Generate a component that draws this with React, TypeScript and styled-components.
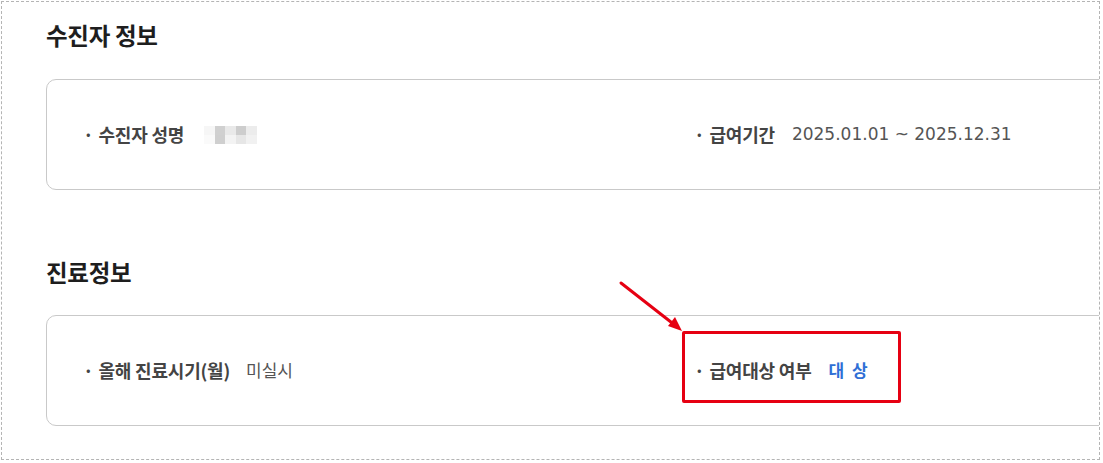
import React from "react";
import styled, { createGlobalStyle } from "styled-components";

const Global = createGlobalStyle`
  html, body { margin: 0; padding: 0; background: #fff; overflow: hidden; }
  body { font-family: "Noto Sans CJK KR", "Noto Sans", sans-serif; }
`;

const Frame = styled.div`
  margin: 1px 0 0 1px;
  width: 1099px;
  height: 459px;
  border: 1px dashed #b4b4b4;
  overflow: hidden;
  padding: 16px 0 0 44px;
  box-sizing: border-box;
  display: flex;
  flex-direction: column;
`;

const Heading = styled.h2<{ $gap: number }>`
  margin: 0 0 ${(p) => p.$gap}px;
  font-size: 23.5px;
  line-height: 34px;
  font-weight: 700;
  color: #1e1e1e;
  letter-spacing: -0.3px;
`;

const Card = styled.div<{ $after: number }>`
  width: 1120px;
  height: 111px;
  box-sizing: border-box;
  border: 1px solid #c9c9c9;
  border-radius: 10px;
  padding: 0 36px;
  display: grid;
  grid-template-columns: 611px 1fr;
  align-items: center;
  margin-bottom: ${(p) => p.$after}px;
`;

const Field = styled.div`
  position: relative;
  display: flex;
  align-items: center;
  height: 28px;
  margin-top: -2px;
`;

const Label = styled.span`
  font-size: 18px;
  font-weight: 700;
  color: #444;
  letter-spacing: -0.2px;
  display: inline-flex;
  align-items: center;
  &::before {
    content: "·";
    font-weight: 700;
    margin-right: 5px;
    color: #444;
  }
`;

const Value = styled.span<{ $tone?: "plain" | "accent"; $gap?: number }>`
  margin-left: ${(p) => p.$gap ?? 16}px;
  font-family: "DejaVu Sans", "Noto Sans CJK KR", sans-serif;
  font-size: 17px;
  font-weight: ${(p) => (p.$tone === "accent" ? 700 : 400)};
  color: ${(p) => (p.$tone === "accent" ? "#2f6fd6" : "#555")};
  word-spacing: ${(p) => (p.$tone === "accent" ? "2px" : "0")};
`;

const Redacted = styled.span`
  margin-left: 20px;
  display: grid;
  grid-template-columns: repeat(5, 10.5px);
  grid-template-rows: repeat(2, 9px);
  margin-top: 2px;
`;

const Px = styled.span<{ $c: string }>`
  background: ${(p) => p.$c};
`;

const Highlight = styled.div`
  position: absolute;
  left: -12px;
  top: -25px;
  width: 219px;
  height: 72px;
  box-sizing: border-box;
  border: 3px solid #e60012;
  border-radius: 2px;
  pointer-events: none;
`;

const Arrow = styled.svg`
  position: absolute;
  left: -76px;
  top: -75px;
  overflow: visible;
`;

const pixels = [
  "#f6f6f6", "#d0d0d0", "#e9e9e9", "#cdcdcd", "#ececec",
  "#fafafa", "#cfcfcf", "#f3f3f3", "#e6e6e6", "#f1f1f1",
];

export default function App() {
  return (
    <>
      <Global />
      <Frame>
        <Heading $gap={27}>수진자 정보</Heading>
        <Card $after={65}>
          <Field>
            <Label>수진자 성명</Label>
            <Redacted>
              {pixels.map((c, i) => (
                <Px key={i} $c={c} />
              ))}
            </Redacted>
          </Field>
          <Field>
            <Label>급여기간</Label>
            <Value $gap={17}>2025.01.01 ~ 2025.12.31</Value>
          </Field>
        </Card>
        <Heading $gap={26}>진료정보</Heading>
        <Card $after={0}>
          <Field>
            <Label>올해 진료시기(월)</Label>
            <Value>미실시</Value>
          </Field>
          <Field>
            <Arrow width="70" height="56" viewBox="0 0 70 56">
              <line x1="3" y1="2" x2="58" y2="45" stroke="#e60012" strokeWidth="3" strokeLinecap="round" />
              <polygon points="64,50 50,45 57,36" fill="#e60012" />
            </Arrow>
            <Highlight />
            <Label>급여대상 여부</Label>
            <Value $tone="accent" $gap={17}>대 상</Value>
          </Field>
        </Card>
      </Frame>
    </>
  );
}
